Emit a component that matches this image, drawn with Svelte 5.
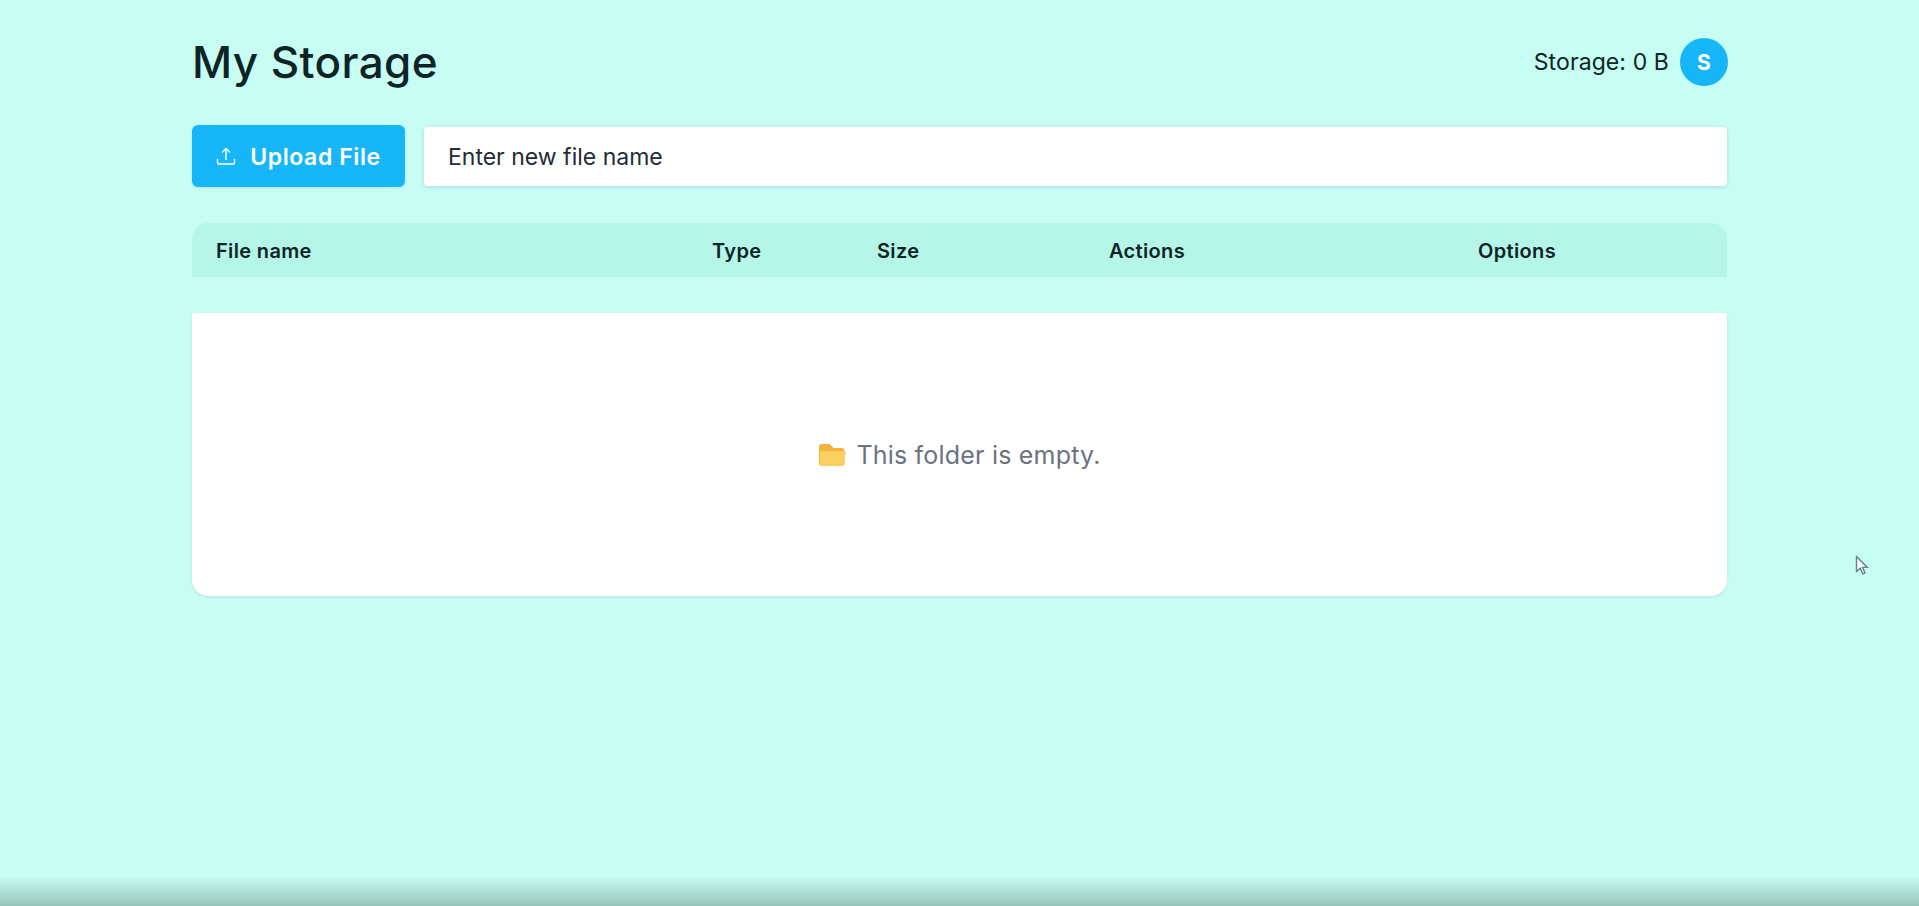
<script>
  const columns = ['File name', 'Type', 'Size', 'Actions', 'Options'];
</script>

<div class="page">
  <main class="content">
    <header class="top">
      <h1>My Storage</h1>
      <div class="account">
        <span class="usage">Storage: 0 B</span>
        <span class="avatar">S</span>
      </div>
    </header>

    <div class="toolbar">
      <button type="button" class="upload">
        <svg viewBox="0 0 20 20" width="20" height="20" fill="none" stroke="currentColor" stroke-width="1.4" stroke-linecap="round" stroke-linejoin="round">
          <path d="M10 13.500V2.500M6.500 6 10 2.500 13.500 6" />
          <path d="M1.500 13.500v3c0 .8.600 1.500 1.500 1.500h14c.9 0 1.500-.7 1.500-1.500v-3" />
        </svg>
        <span>Upload File</span>
      </button>
      <input type="text" placeholder="Enter new file name" />
    </div>

    <div class="table-head">
      {#each columns as column}
        <span>{column}</span>
      {/each}
    </div>

    <section class="empty">
      <svg viewBox="0 0 28 24" width="28" height="24">
        <path d="M1 3.500C1 2 2 1 3.500 1h7.300c.9 0 1.500.4 2 1l2.700 3H24c1.500 0 2.500 1 2.500 2.500v13c0 1.500-1 2.500-2.500 2.500H3.500C2 23 1 22 1 20.500z" fill="#f2b33d" />
        <path d="M2 10.500C2 9 3 8 4.500 8H26c1.300 0 2 1 1.700 2.200l-2.500 11C24.900 22.400 24 23 22.800 23H3.500C2 23 1.300 22 1.500 20.500z" fill="#fbd060" />
      </svg>
      <span>This folder is empty.</span>
    </section>
  </main>

  <svg class="cursor" viewBox="0 0 16 22" width="16" height="22">
    <path d="M1.500 1.500v15l3.700-3.300 2.500 5.600 2.300-1-2.500-5.400h4.800z" fill="#fff" stroke="#5f8582" stroke-width="1.400" />
  </svg>
  <div class="bottom-fade"></div>
</div>

<style>
  :global(body) {
    margin: 0;
    background: #c7fdf3;
  }

  .page {
    position: relative;
    height: 906px;
    overflow: hidden;
    background: #c7fdf3;
    color: #0c2426;
    font-family: Inter, "Noto Sans", sans-serif;
  }

  .content {
    width: 1535px;
    margin: 0 auto;
  }

  .top {
    display: flex;
    align-items: center;
    justify-content: space-between;
    height: 48px;
    padding-top: 38px;
  }

  h1 {
    margin: 0;
    font-size: 44px;
    line-height: 48px;
    font-weight: 500;
    letter-spacing: 0.4px;
  }

  .account {
    display: flex;
    align-items: center;
    gap: 11px;
    margin-right: -1px;
  }

  .usage {
    font-size: 23px;
    font-weight: 400;
    letter-spacing: 0.1px;
  }

  .avatar {
    display: flex;
    align-items: center;
    justify-content: center;
    width: 48px;
    height: 48px;
    border-radius: 50%;
    background: #16b6f8;
    color: #fff;
    font-size: 21px;
    font-weight: 700;
  }

  .toolbar {
    display: flex;
    align-items: center;
    gap: 19px;
    margin-top: 39px;
  }

  .upload {
    display: flex;
    align-items: center;
    justify-content: center;
    gap: 14px;
    flex: 0 0 213px;
    height: 62px;
    padding: 0;
    border: 0;
    border-radius: 6px;
    background: #16b6f8;
    color: #fff;
    font: inherit;
    font-size: 23px;
    font-weight: 600;
    letter-spacing: 0.6px;
    box-shadow: 0 1px 3px rgba(0, 0, 0, 0.1);
  }

  .upload span {
    padding-top: 2px;
  }

  input {
    flex: 1;
    height: 59px;
    box-sizing: border-box;
    padding: 2px 24px 0;
    border: 0;
    border-radius: 4px;
    background: #fff;
    font: inherit;
    font-size: 23px;
    color: #232c36;
    box-shadow: 0 1px 4px rgba(0, 0, 0, 0.14);
  }

  input::placeholder {
    color: #232c36;
    opacity: 1;
  }

  .table-head {
    display: grid;
    grid-template-columns: 496px 165px 232px 369px 273px;
    align-items: center;
    height: 54px;
    margin-top: 36px;
    border-radius: 16px 16px 0 0;
    background: #b5f6e9;
    font-size: 20px;
    font-weight: 600;
    letter-spacing: 0.35px;
  }

  .table-head span {
    padding: 1px 0 0 24px;
  }

  .empty {
    display: flex;
    align-items: center;
    justify-content: center;
    gap: 10px;
    height: 283px;
    margin-top: 36px;
    border-radius: 0 0 16px 16px;
    background: #fff;
    color: #6b7280;
    font-size: 25px;
    letter-spacing: 0.2px;
    box-shadow: 0 1px 3px rgba(0, 0, 0, 0.1);
  }

  .cursor {
    position: absolute;
    left: 1855px;
    top: 555px;
  }

  .bottom-fade {
    position: absolute;
    left: 0;
    right: 0;
    bottom: 0;
    height: 30px;
    background: linear-gradient(to bottom, rgba(148, 190, 180, 0), rgba(148, 190, 180, 0.9));
  }
</style>
